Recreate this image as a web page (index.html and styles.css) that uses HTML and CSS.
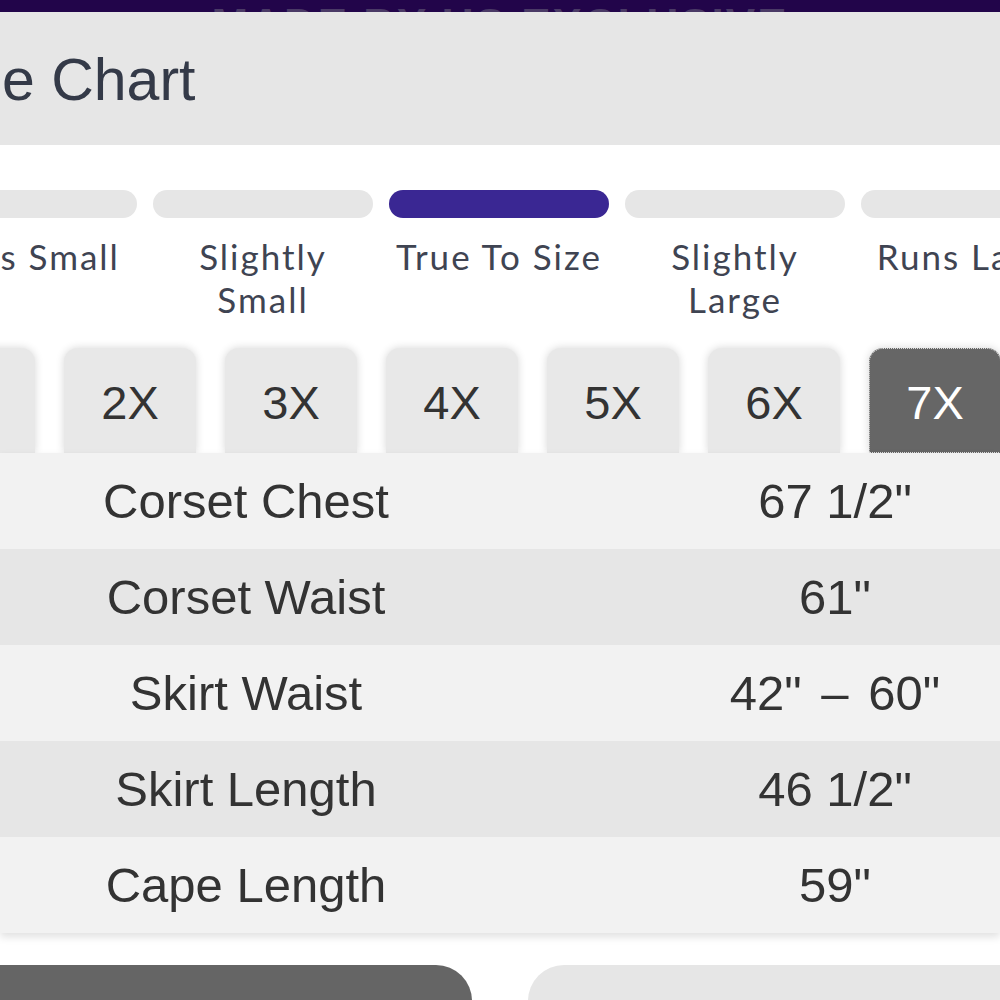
FILE: index.html
```html
<!DOCTYPE html>
<html lang="en">
<head>
    <meta charset="UTF-8">
    <meta name="viewport" content="width=device-width, initial-scale=1.0">
    <title>Size Chart</title>
    <link rel="stylesheet" href="styles.css">
</head>
<body>
    <div class="promo"><span>MADE BY US EXCLUSIVE</span></div>

    <div class="modal">
        <div class="modalHeader">
            <h2>Size Chart</h2>
        </div>

        <!-- Fit scale -->
        <div class="fit">
            <div class="fitBars">
                <div class="bar"></div>
                <div class="bar"></div>
                <div class="bar active"></div>
                <div class="bar"></div>
                <div class="bar"></div>
            </div>
            <div class="fitLabels">
                <div>Runs Small</div>
                <div>Slightly Small</div>
                <div>True To Size</div>
                <div>Slightly Large</div>
                <div>Runs Large</div>
            </div>
        </div>

        <!-- Size tabs -->
        <div class="tabs">
            <div class="tab">1X</div>
            <div class="tab">2X</div>
            <div class="tab">3X</div>
            <div class="tab">4X</div>
            <div class="tab">5X</div>
            <div class="tab">6X</div>
            <div class="tab selected">7X</div>
        </div>

        <div class="measures">
            <div class="row"><div class="name">Corset Chest</div><div class="value">67 1/2"</div></div>
            <div class="row"><div class="name">Corset Waist</div><div class="value">61"</div></div>
            <div class="row"><div class="name">Skirt Waist</div><div class="value">42" <span class="dash">&ndash;</span> 60"</div></div>
            <div class="row"><div class="name">Skirt Length</div><div class="value">46 1/2"</div></div>
            <div class="row"><div class="name">Cape Length</div><div class="value">59"</div></div>
        </div>

        <div class="actions">
            <div class="btn dark"></div>
            <div class="btn light"></div>
        </div>
    </div>
</body>
</html>
```

FILE: styles.css
```css
* {
    box-sizing: border-box;
    margin: 0;
    padding: 0;
}

body {
    background: #fff;
    width: 1000px;
    height: 1000px;
    overflow: hidden;
    font-family: 'Liberation Sans', Arial, sans-serif;
}

.promo {
    height: 12px;
    background: #22054a;
    overflow: hidden;
    text-align: center;
}

.promo span {
    display: block;
    margin-top: 3px;
    font-size: 44px;
    font-weight: bold;
    letter-spacing: 2px;
    line-height: 44px;
    color: #4a3a66;
}

.modalHeader {
    height: 133px;
    background: #e6e6e6;
    padding-top: 35px;
}

.modalHeader h2 {
    margin-left: -80px;
    font-size: 59px;
    font-weight: normal;
    line-height: 66px;
    color: #343a48;
    white-space: nowrap;
}

/* fit scale */
.fit {
    margin-left: -83px;
    margin-top: 45px;
}

.fitBars,
.fitLabels {
    display: flex;
    gap: 16px;
}

.bar {
    flex: 0 0 220px;
    height: 28px;
    border-radius: 14px;
    background: #e6e6e6;
}

.bar.active {
    background: #3a2793;
}

.fitLabels {
    margin-top: 17px;
}

.fitLabels div {
    flex: 0 0 220px;
    text-align: center;
    font-family: Lato, 'Open Sans', sans-serif;
    font-size: 35px;
    letter-spacing: 2px;
    line-height: 43px;
    color: #3f4452;
    padding: 0 22px;
}

.fitLabels div:first-child,
.fitLabels div:last-child,
.fitLabels div:nth-child(3) {
    white-space: nowrap;
    padding: 0;
}

/* size tabs */
.tabs {
    display: flex;
    gap: 29px;
    margin-left: -97px;
    margin-top: 27px;
    position: relative;
    z-index: 1;
}

.tab {
    flex: 0 0 132px;
    height: 105px;
    padding-top: 4px;
    display: flex;
    justify-content: center;
    align-items: center;
    border-radius: 14px 14px 0 0;
    background: #e8e8e8;
    box-shadow: 0 0 8px rgba(0, 0, 0, 0.16);
    font-size: 47px;
    color: #333;
}

.tab.selected {
    background: #666;
    color: #fff;
    outline: 1px dotted #ddd;
    outline-offset: -1px;
}

/* measurement table */
.measures {
    position: relative;
    z-index: 2;
    box-shadow: 0 4px 8px rgba(0, 0, 0, 0.12);
}

.row {
    display: grid;
    grid-template-columns: 492px 1fr;
    height: 96px;
    align-items: center;
    background: #f2f2f2;
    font-size: 49px;
    color: #333;
}

.row:nth-child(even) {
    background: #e6e6e6;
}

.row .name {
    text-align: center;
}

.row .value {
    text-align: center;
    padding-left: 178px;
    white-space: nowrap;
}

.row .dash {
    margin: 0 6px;
}

.actions {
    display: flex;
    justify-content: space-between;
    margin-top: 32px;
}

.btn {
    width: 472px;
    height: 60px;
}

.btn.dark {
    background: #656565;
    border-radius: 0 36px 0 0;
}

.btn.light {
    background: #e6e6e6;
    border-radius: 36px 0 0 0;
}
```
